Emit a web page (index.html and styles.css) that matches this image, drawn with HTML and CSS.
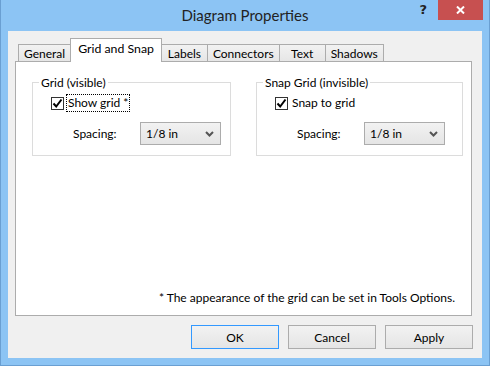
FILE: index.html
```html
<!DOCTYPE html>
<html lang="en">
<head>
<meta charset="UTF-8">
<meta name="viewport" content="width=device-width, initial-scale=1.0">
<title>Diagram Properties</title>
<link rel="stylesheet" href="styles.css">
</head>
<body>
<div class="window">
    <div class="titlebar">
        <span></span>
        <span class="title">Diagram Properties</span>
        <div class="caption-buttons">
            <span class="help-btn">?</span>
            <span class="close-btn">
                <svg width="9" height="8" viewBox="0 0 9 8"><path d="M1 0.5 L8 7.5 M8 0.5 L1 7.5" stroke="#fff" stroke-width="2"/></svg>
            </span>
        </div>
    </div>

    <div class="client">
        <div class="tabs">
            <div class="tab">General</div>
            <div class="tab active">Grid and Snap</div>
            <div class="tab">Labels</div>
            <div class="tab">Connectors</div>
            <div class="tab tab-text">Text</div>
            <div class="tab">Shadows</div>
        </div>

        <div class="panel">
            <div class="groups">
                <fieldset class="group group-grid">
                    <legend>Grid (visible)</legend>
                    <div class="group-body">
                        <label class="check">
                            <span class="box">
                                <svg width="11" height="11" viewBox="0 0 11 11"><path d="M1.5 5.5 L4.2 8.5 L9.5 1.5" fill="none" stroke="#000" stroke-width="2"/></svg>
                            </span>
                            <span class="check-text focused">Show grid *</span>
                        </label>
                        <div class="field">
                            <span class="field-label">Spacing:</span>
                            <div class="combo">
                                <span>1/8 in</span>
                                <svg width="9" height="6" viewBox="0 0 9 6"><path d="M1 1 L4.5 4.5 L8 1" fill="none" stroke="#555" stroke-width="2"/></svg>
                            </div>
                        </div>
                    </div>
                </fieldset>

                <fieldset class="group group-snap">
                    <legend>Snap Grid (invisible)</legend>
                    <div class="group-body">
                        <label class="check">
                            <span class="box">
                                <svg width="11" height="11" viewBox="0 0 11 11"><path d="M1.5 5.5 L4.2 8.5 L9.5 1.5" fill="none" stroke="#000" stroke-width="2"/></svg>
                            </span>
                            <span class="check-text">Snap to grid</span>
                        </label>
                        <div class="field">
                            <span class="field-label">Spacing:</span>
                            <div class="combo">
                                <span>1/8 in</span>
                                <svg width="9" height="6" viewBox="0 0 9 6"><path d="M1 1 L4.5 4.5 L8 1" fill="none" stroke="#555" stroke-width="2"/></svg>
                            </div>
                        </div>
                    </div>
                </fieldset>
            </div>

            <p class="note">* The appearance of the grid can be set in Tools Options.</p>
        </div>

        <div class="buttons">
            <button class="btn default">OK</button>
            <button class="btn">Cancel</button>
            <button class="btn">Apply</button>
        </div>
    </div>
</div>
</body>
</html>
```

FILE: styles.css
```css
:root {
    /* colors */
    --frame: #8cc4f4;
    --frame-edge: #6a9fd2;
    --face: #f0f0f0;
    --edge: #acacac;
    --group-edge: #dcdcdc;
    --close: #c75050;
    --text: #000;
    /* fonts */
    --ui: Lato, "Noto Sans", "Liberation Sans", sans-serif;
}

body {
    margin: 0;
    font-family: var(--ui);
    font-size: 12px;
    color: var(--text);
}

.window {
    width: 490px;
    height: 366px;
    box-sizing: border-box;
    background-color: var(--frame);
    border: 1px solid var(--frame-edge);
    border-top: none;
    display: flex;
    flex-direction: column;
}

/* title bar */
.titlebar {
    height: 31px;
    display: grid;
    grid-template-columns: 1fr auto 1fr;
    align-items: start;
}

.title {
    font-size: 15px;
    color: #222;
    line-height: 31px;
}

.caption-buttons {
    justify-self: end;
    display: flex;
    align-items: center;
    margin-right: 6px;
}

.help-btn {
    font-family: "DejaVu Sans", sans-serif;
    font-weight: bold;
    font-size: 13px;
    color: #222;
    margin-right: 11px;
    margin-top: -1px;
}

.close-btn {
    width: 45px;
    height: 20px;
    background-color: var(--close);
    display: flex;
    align-items: center;
    justify-content: center;
}

/* client area */
.client {
    flex: 1;
    margin: 0 7px 7px 7px;
    background-color: var(--face);
    padding: 8px 9px 9px 7px;
    display: flex;
    flex-direction: column;
}

.tabs {
    display: flex;
    align-items: flex-end;
    height: 22px;
    margin-left: 3px;
    position: relative;
    z-index: 1;
}

.tab {
    height: 16px;
    line-height: 17px;
    padding: 0 5px;
    min-width: 35px;
    text-align: center;
    border: 1px solid var(--edge);
    border-bottom: none;
    background: linear-gradient(#f2f2f2, #e6e6e6);
    margin-left: -1px;
}

.tab:first-child {
    margin-left: 0;
}

.tab.active {
    height: 23px;
    line-height: 20px;
    padding: 0 7px;
    background: #fff;
    margin-bottom: -1px;
    font-size: 12.3px;
}

.tab-text {
    min-width: 35px;
}

.panel {
    flex: 1;
    background-color: #fff;
    border: 1px solid var(--edge);
    margin-right: 1px;
    padding: 13px 8px 10px 16px;
    display: flex;
    flex-direction: column;
}

.groups {
    display: flex;
    gap: 25px;
}

.group {
    margin: 0;
    padding: 4px 0 10px 6px;
    border: 1px solid var(--group-edge);
    min-width: 0;
    box-sizing: border-box;
}

.group-grid {
    width: 199px;
}

.group-snap {
    width: 207px;
}

.group legend {
    padding: 0 2px;
    line-height: 15px;
}

.group-body {
    margin-left: 12px;
}

.check {
    display: flex;
    align-items: center;
    height: 18px;
}

.box {
    width: 11px;
    height: 11px;
    border: 1px solid #333;
    background: #fff;
    display: flex;
    margin-right: 2px;
}

.check-text {
    padding: 0 1px;
    line-height: 16px;
    border: 1px solid transparent;
}

.check-text.focused {
    border: 1px dotted #000;
}

.field {
    display: flex;
    align-items: center;
    margin-top: 10px;
    padding-left: 22px;
}

.field-label {
    width: 67px;
}

.combo {
    width: 68px;
    height: 21px;
    border: 1px solid var(--edge);
    background: linear-gradient(#f2f2f2, #e5e5e5);
    display: flex;
    align-items: center;
    justify-content: space-between;
    padding: 0 6px 0 5px;
}

.note {
    margin: auto 8px 0 0;
    text-align: right;
}

/* buttons */
.buttons {
    display: flex;
    justify-content: flex-end;
    gap: 9px;
    margin-top: 9px;
}

.btn {
    width: 88px;
    height: 24px;
    font-family: var(--ui);
    font-size: 12px;
    color: var(--text);
    border: 1px solid var(--edge);
    background: linear-gradient(#f2f2f2, #e5e5e5);
    padding: 0;
}

.btn.default {
    border-color: #3399ff;
}
```
